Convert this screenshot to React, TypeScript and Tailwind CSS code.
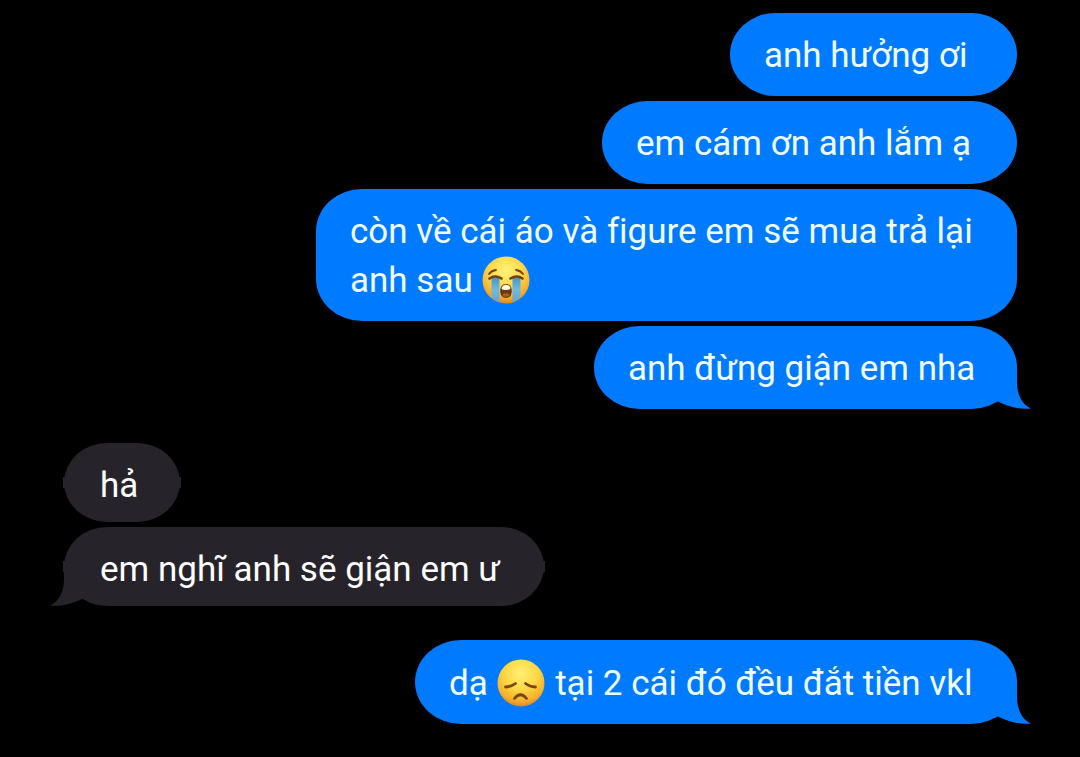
import type { ReactNode } from "react";
import clsx from "clsx";

const CryingFace = () => (
  <svg
    viewBox="0 0 48 48"
    className="mx-px inline-block size-12 align-[-12px]"
    role="img"
    aria-label="loudly crying face"
  >
    <defs>
      <radialGradient id="cry-face" cx="0.5" cy="0.3" r="0.7">
        <stop offset="0" stopColor="#fff27a" />
        <stop offset="0.5" stopColor="#fdd848" />
        <stop offset="0.85" stopColor="#f3ab2b" />
        <stop offset="1" stopColor="#dc8720" />
      </radialGradient>
      <linearGradient id="cry-tear" x1="0" y1="0" x2="0" y2="1">
        <stop offset="0" stopColor="#4599cc" />
        <stop offset="0.5" stopColor="#72b9de" />
        <stop offset="1" stopColor="#5ba8d4" />
      </linearGradient>
    </defs>
    <circle cx="24" cy="24" r="23.5" fill="url(#cry-face)" />
    <path d="M9.500 22h8v24q-4.500-1.500-8-5.500z" fill="url(#cry-tear)" />
    <path d="M30.500 22h8v18.500q-3.500 4-8 5.500z" fill="url(#cry-tear)" />
    <g fill="none" stroke="#714015" strokeLinecap="round">
      <path d="M7 18q2.500-3.500 7-4M41 18q-2.500-3.500-7-4" strokeWidth="1.8" />
      <path d="M7.500 22.500q5.500-4 12 0M28.500 22.500q6.500-4 12 0" strokeWidth="2.6" />
    </g>
    <path
      d="M24 28c3.800 0 5.800 3.200 5.800 7S27.800 42 24 42s-5.800-3-5.800-7 2-7 5.800-7z"
      fill="#6b3610"
    />
    <path d="M19.500 32c1-2.300 2.500-3.300 4.500-3.300s3.500 1 4.500 3.300q-.2 2-4.500 2t-4.500-2z" fill="#fff8e4" />
    <ellipse cx="24" cy="39" rx="3.5" ry="1.8" fill="#a3601f" />
  </svg>
);

const SadFace = () => (
  <svg
    viewBox="0 0 48 48"
    className="mx-px inline-block size-12 align-[-12px]"
    role="img"
    aria-label="disappointed face"
  >
    <defs>
      <radialGradient id="sad-face" cx="0.5" cy="0.3" r="0.7">
        <stop offset="0" stopColor="#ffef76" />
        <stop offset="0.5" stopColor="#fed844" />
        <stop offset="0.85" stopColor="#f5ad2a" />
        <stop offset="1" stopColor="#db8520" />
      </radialGradient>
    </defs>
    <circle cx="24" cy="24" r="23.5" fill="url(#sad-face)" />
    <g fill="none" stroke="#7b4814" strokeLinecap="round">
      <path d="M8.500 28q6-.3 10-3.500M38.500 28q-6-.3-10-3.500" strokeWidth="2.8" />
      <path d="M17.500 39.500q6-7.500 12 0" strokeWidth="2.8" />
    </g>
  </svg>
);

type BubbleProps = {
  sent?: boolean;
  tail?: boolean;
  className?: string;
  children: ReactNode;
};

const Bubble = ({ sent, tail, className, children }: BubbleProps) => (
  <li
    className={clsx(
      "relative rounded-[46px/42px]",
      sent
        ? "self-end bg-[#007aff] pt-[19px] pb-4 pl-[34px] text-[#effeff]"
        : "mx-px self-start bg-[#26242a] pt-[19px] pb-3 pl-9 text-white before:absolute before:-inset-x-px before:top-[34px] before:h-[11px] before:bg-[#26242a]",
      className
    )}
  >
    {/* Tail */}
    {tail && (
      <svg
        viewBox="0 0 40 42"
        aria-hidden="true"
        className={clsx(
          "absolute bottom-0 h-[42px] w-10",
          sent ? "-right-[14px] fill-[#007aff]" : "-left-[14px] -scale-x-100 fill-[#26242a]"
        )}
      >
        <path d="M26 0V15C26 27 31 38 40 41.5C29 43 15 39 6 34L0 20V0Z" />
      </svg>
    )}
    <p className="relative">{children}</p>
  </li>
);

const App = () => {
  return (
    <main className="min-h-screen bg-black px-[63px] pt-[13px] pb-8 font-['Roboto','Noto_Sans',sans-serif] text-[35px] leading-[48px] [font-variant-ligatures:none]">
      <div className="flex flex-col gap-[34px]">
        <ul className="flex flex-col gap-[5px]">
          <Bubble sent className="min-w-[287px]">
            anh hưởng ơi
          </Bubble>
          <Bubble sent className="min-w-[415px]">
            em cám ơn anh lắm ạ
          </Bubble>
          <Bubble sent className="min-w-[701px]">
            còn về cái áo và figure em sẽ mua trả lại
            <br />
            anh sau <CryingFace />
          </Bubble>
          <Bubble sent tail className="min-w-[423px]">
            anh đừng giận em nha
          </Bubble>
        </ul>

        <ul className="flex flex-col gap-[5px]">
          <Bubble className="min-w-[116px]">hả</Bubble>
          <Bubble tail className="min-w-[480px]">
            em nghĩ anh sẽ giận em ư
          </Bubble>
        </ul>

        <ul className="flex flex-col gap-[5px]">
          <Bubble sent tail className="min-w-[602px]">
            dạ <SadFace /> tại 2 cái đó đều đắt tiền vkl
          </Bubble>
        </ul>
      </div>
    </main>
  );
};

export default App;
